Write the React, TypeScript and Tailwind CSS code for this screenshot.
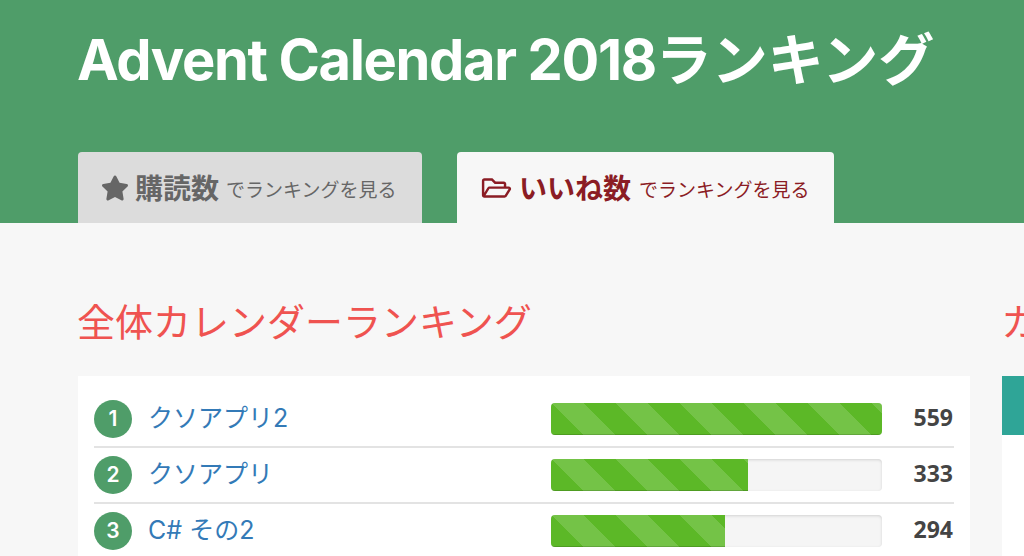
import React from "react";
import { FaStar, FaRegFolderOpen } from "react-icons/fa";

const rows = [
  { rank: 1, name: "クソアプリ2", value: 559 },
  { rank: 2, name: "クソアプリ", value: 333 },
  { rank: 3, name: "C# その2", value: 294 },
];

export default function App() {
  return (
    <div className="h-[556px] w-[1024px] overflow-hidden bg-[#f7f7f7] font-['Inter','Noto_Sans_CJK_JP',sans-serif]">
      <header className="flex h-[223px] flex-col justify-between bg-[#4f9d69] pr-[78px] pl-[77px] pt-[22px]">
        <h1 className="text-[56px] leading-[76px] font-bold whitespace-nowrap text-white">
          <span className="tracking-[-1.35px]">Advent Calendar 2018</span>ランキング
        </h1>
        <div className="ml-px flex gap-[35px] font-['Open_Sans','Noto_Sans_CJK_JP',sans-serif]">
          <div className="flex h-[71px] w-[344px] items-center gap-[6px] rounded-t-[4px] bg-[#dcdcdc] pl-[23px] text-[#666666]">
            <FaStar className="h-[26px] w-[28px]" />
            <span className="mt-[1px] text-[28px] font-bold">購読数</span>
            <span className="mt-[5px] ml-[1px] text-[19px]">でランキングを見る</span>
          </div>
          <div className="flex h-[71px] w-[377px] items-center gap-[7px] rounded-t-[4px] bg-[#f7f7f7] pl-[24px] text-[#8b1c24]">
            <FaRegFolderOpen className="h-[26px] w-[31px]" />
            <span className="mt-[1px] text-[28px] font-bold">いいね数</span>
            <span className="mt-[5px] ml-[1px] text-[19px]">でランキングを見る</span>
          </div>
        </div>
      </header>
      <main className="flex gap-[32px] pl-[78px]">
        <section className="w-[892px] shrink-0">
          <h2 className="mt-[72px] mb-[27px] -ml-px text-[38px] leading-[54px] font-normal whitespace-nowrap text-[#ef5350]">
            全体カレンダーランキング
          </h2>
          <div className="bg-white px-[16px] pt-[16px]">
            {rows.map((r) => (
              <div key={r.rank} className="flex h-[56px] items-center border-b-2 border-[#e3e3e3]">
                <div className="flex h-[38px] w-[38px] shrink-0 items-center justify-center rounded-full bg-[#4f9d69] text-[21px] font-semibold text-white">
                  {r.rank}
                </div>
                <a className="ml-[16px] w-[403px] shrink-0 text-[25px] text-[#337ab7]">{r.name}</a>
                <div className="h-[32px] w-[331px] shrink-0 overflow-hidden rounded-[4px] bg-[#f5f5f5] shadow-[inset_0_1px_3px_rgba(0,0,0,0.14)]">
                  <div
                    className="h-full bg-[#5cb827] bg-[linear-gradient(45deg,rgba(255,255,255,0.15)_25%,transparent_25%,transparent_50%,rgba(255,255,255,0.15)_50%,rgba(255,255,255,0.15)_75%,transparent_75%,transparent)] bg-[length:64px_64px] shadow-[inset_0_-1px_0_rgba(0,0,0,0.15)]"
                    style={{ width: `${(r.value / 559) * 100}%` }}
                  />
                </div>
                <div className="mb-[3px] flex-1 pr-px text-right font-['Open_Sans',sans-serif] text-[23px] font-bold text-[#444444]">
                  {r.value}
                </div>
              </div>
            ))}
          </div>
        </section>
        <section className="w-[892px] shrink-0">
          <h2 className="mt-[72px] mb-[27px] -ml-px text-[38px] leading-[54px] font-normal whitespace-nowrap text-[#ef5350]">
            カテゴリー別ランキング
          </h2>
          <div className="h-[200px] bg-white">
            <div className="h-[59px] bg-[#2fa597]" />
          </div>
        </section>
      </main>
    </div>
  );
}
